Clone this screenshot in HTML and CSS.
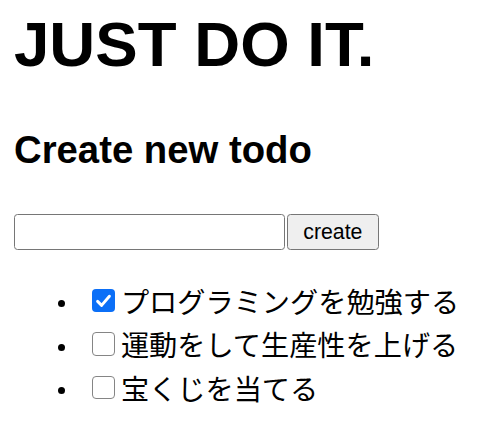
FILE: index.html
```html
<!DOCTYPE html>
<html lang="ja">
<head>
<meta charset="utf-8">
<title>JUST DO IT.</title>
<link rel="stylesheet" href="styles.css">
</head>
<body>
<h1 class="title">JUST DO IT.</h1>
<h3 class="subtitle">Create new todo</h3>
<form class="create-form" onsubmit="return false">
  <input class="todo-input" type="text">
  <button class="create-btn" type="submit">create</button>
</form>
<ul class="todo-list">
  <li class="todo-item">
    <span class="box box-checked" role="checkbox" aria-checked="true">
      <svg class="check" viewBox="0 0 23 23" width="23" height="23"><path d="M5.6 12.4 L9.6 16.4 L17.4 7.2" fill="none" stroke="#fff" stroke-width="2.9" stroke-linecap="round" stroke-linejoin="round"/></svg>
    </span>
    <span class="todo-text">プログラミングを勉強する</span>
  </li>
  <li class="todo-item">
    <span class="box" role="checkbox" aria-checked="false"></span>
    <span class="todo-text">運動をして生産性を上げる</span>
  </li>
  <li class="todo-item">
    <span class="box" role="checkbox" aria-checked="false"></span>
    <span class="todo-text">宝くじを当てる</span>
  </li>
</ul>
</body>
</html>
```

FILE: styles.css
```css
html, body {
  background: #fff;
}
body {
  margin: 0;
  padding: 0 14px;
  color: #000;
  font-family: "Liberation Sans", Arial, "Noto Sans CJK JP", sans-serif;
}
.title {
  margin: 12px 0 0;
  font-size: 63.6px;
  line-height: 64px;
  font-weight: bold;
}
.subtitle {
  margin: 52px 0 0;
  font-size: 38.3px;
  line-height: 44px;
  font-weight: bold;
}
.create-form {
  margin: 42px 0 0;
  display: flex;
  gap: 1.7px;
  height: 36px;
}
.todo-input {
  box-sizing: border-box;
  width: 271px;
  height: 36px;
  margin: 0;
  padding: 0 4px;
  border: 1.75px solid #767676;
  border-radius: 3.5px;
  background: #fff;
  font: 21px "Liberation Sans", Arial, sans-serif;
}
.create-btn {
  box-sizing: border-box;
  width: 92.3px;
  height: 36px;
  margin: 0;
  padding: 0;
  border: 1.75px solid #767676;
  border-radius: 3.5px;
  background: #efefef;
  color: #000;
  font: 21.3px "Liberation Sans", Arial, sans-serif;
  line-height: 30px;
}
.todo-list {
  margin: 29px 0 0;
  padding: 0;
  list-style: none;
}
.todo-item {
  display: flex;
  align-items: center;
  height: 43.35px;
  font-family: "Noto Sans CJK JP", sans-serif;
  font-size: 28.2px;
  line-height: 43.35px;
}
.todo-item::before {
  content: "";
  width: 7px;
  height: 7px;
  border-radius: 50%;
  background: #000;
  margin: 6px 27px 0 44px;
  flex: none;
}
.box {
  box-sizing: border-box;
  width: 23.4px;
  height: 23.4px;
  flex: none;
  border: 1.75px solid #858585;
  border-radius: 4px;
  background: #fff;
  margin-right: 5.5px;
  display: flex;
}
.box-checked {
  border: none;
  background: #0b6ff7;
}
.check {
  display: block;
}
.todo-text {
  white-space: nowrap;
}
```
